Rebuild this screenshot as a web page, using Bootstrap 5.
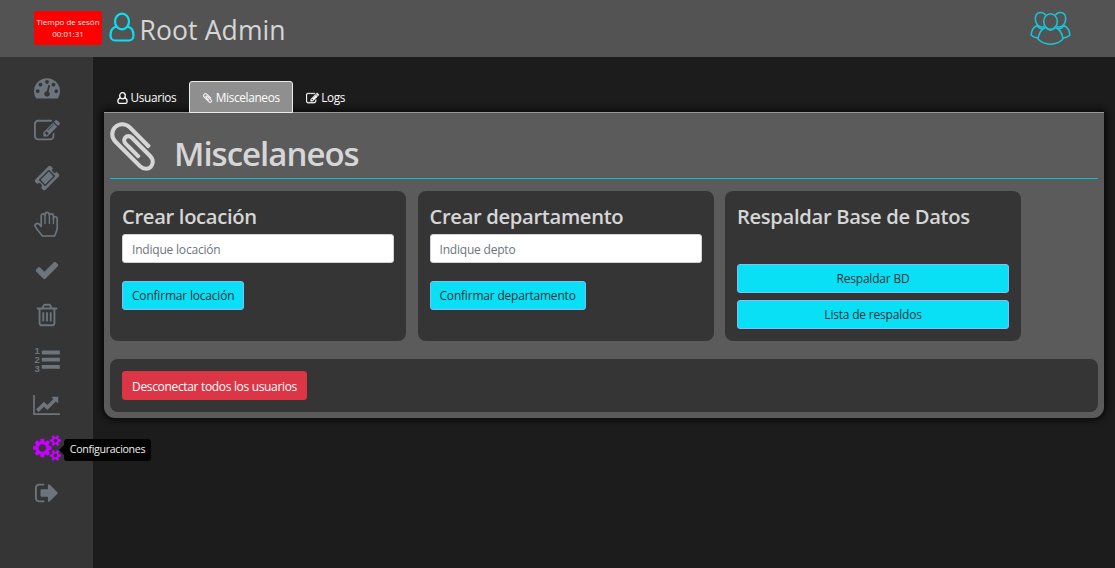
<!DOCTYPE html>
<html lang="es">
<head>
<meta charset="utf-8">
<meta name="viewport" content="width=device-width, initial-scale=1">
<title>Configuraciones</title>
<link href="https://cdn.jsdelivr.net/npm/bootstrap@5.3.0/dist/css/bootstrap.min.css" rel="stylesheet">
<style>
  body { font-family: "Open Sans", "Noto Sans", sans-serif; font-size: 12.25px; background: #1c1c1c; color: #d6d6d6; height: 100vh; overflow: hidden; }
  svg { display: block; flex: none; overflow: visible; }
  .topbar { height: 57px; background: #535353; }
  .session { width: 68px; height: 34px; margin: 11px 7px 0 34px; padding-top: 5px; background: #f00; border-radius: 3px; font-size: 8px; line-height: 12px; color: #e8e8e8; white-space: nowrap; letter-spacing: -.02px; }
  .brand-name { font-size: 26.5px; line-height: 40px; margin: 10px 0 0 4.5px; letter-spacing: .12px; }
  .side { width: 93px; background: #353535; color: #6c757d; }
  .side-icons { padding: 18px 0 0 34px; grid-template-rows: 43px 47px 46px 46px 45px 45px 45px 43px 45px 26px; }
  .side-icons a { color: inherit; height: 26px; display: flex; position: relative; }
  .side-icons a.current { color: #c800ff; }
  .tip { position: absolute; left: 30px; top: 4px; height: 22px; width: 87px; background: #040404; color: #eee; border-radius: 3px; font-size: 10.6px; line-height: 21px; text-align: center; letter-spacing: -.3px; z-index: 5; }
  .tip::before { content: ""; position: absolute; left: -5px; top: 6px; border: 5px solid transparent; border-left: 0; border-right-color: #040404; }
  .workspace { padding: 24px 11px 0; }
  .tabs-row .nav-link { height: 32px; padding: 2px 12px 0; border: 1px solid transparent; border-radius: 3px 3px 0 0; color: #fff; display: flex; align-items: center; font-size: 11.8px; letter-spacing: -.34px; }
  .tabs-row .nav-link svg { margin-right: 2.5px; }
  .tabs-row .nav-link.active { background: #8f8f8f; border-color: #ececec; color: #fff; }
  .tabs-row { margin-bottom: -1px; position: relative; }
  .panel { height: 306px; background: #5b5b5b; border-top: 1px solid #999; border-radius: 0 0 11px 11px; box-shadow: 0 0 6px 2px #080808; padding: 0 6px; }
  .panel-head { height: 66px; border-bottom: 1px solid #00c4d4; }
  .panel-head svg { margin-top: 4.5px; margin-left: -6px; }
  .panel-head h1 { font-size: 33px; line-height: 44px; font-weight: 600; margin: 19px 0 0 13px; letter-spacing: -1px; }
  .box { background: #353535; border-radius: 8px; padding: 12px; }
  .boxes { gap: 11.5px; margin: 12px 0 18px; }
  .boxes .box { width: 296px; height: 150px; }
  .box h2 { font-size: 20.2px; font-weight: 600; line-height: 26px; margin: 0 0 5px; letter-spacing: -.33px; white-space: nowrap; }
  .box .form-control { height: 29px; padding: 1px 9px 0; font-size: 12px; border-radius: 3px; border-color: #ced4da; letter-spacing: -.2px; margin-bottom: 18px; background: #fff; }
  .form-control::placeholder { color: #6c757d; }
  .box .btn { height: 29px; padding: 0 9px; font-size: 12px; line-height: 27px; border-radius: 3px; white-space: nowrap; }
  .btn-cyan { background: #09dff5; border-color: #80bdff; color: #2b3338; font-weight: 500; }
  .box .btn-cyan { letter-spacing: -.2px; }
  .box .btn-danger { letter-spacing: -.33px; padding-top: 1px; }
  .btn-cyan:hover { background: #07c9dd; }
</style>
</head>
<body class="d-flex flex-column">
<svg width="0" height="0" class="d-none">
  <symbol id="i-edit" viewBox="0 0 1792 1792"><path d="M888 1184l116-116-152-152-116 116v56h96v96h56zm440-720q-16-16-33 1l-350 350q-17 17-1 33t33-1l350-350q17-17 1-33zm80 594v190q0 119-84.500 203.500t-203.500 84.500h-832q-119 0-203.500-84.500t-84.500-203.500v-832q0-119 84.500-203.500t203.500-84.500h832q63 0 117 25 15 7 18 23 3 17-9 29l-49 49q-14 14-32 8-23-6-45-6h-832q-66 0-113 47t-47 113v832q0 66 47 113t113 47h832q66 0 113-47t47-113v-126q0-13 9-22l64-64q15-15 35-7t20 29zm-96-738l288 288-672 672h-288v-288zm444 132l-92 92-288-288 92-92q28-28 68-28t68 28l152 152q28 28 28 68t-28 68z"/></symbol>
  <symbol id="i-clip" viewBox="0 0 1792 1792"><path d="M1596 1385q0 117-79 196t-196 79q-135 0-235-100l-777-776q-113-115-113-271 0-159 110-270t269-111q158 0 273 113l605 606q10 10 10 22 0 16-30.500 46.500t-46.500 30.500q-13 0-23-10l-606-607q-79-77-181-77-106 0-179 75t-73 181q0 105 76 181l776 777q63 63 145 63 64 0 106-42t42-106q0-82-63-145l-581-581q-26-24-60-24-29 0-48 19t-19 48q0 32 25 59l410 410q10 10 10 22 0 16-31 47t-47 31q-12 0-22-10l-410-410q-63-61-63-149 0-82 57-139t139-57q88 0 149 63l581 581q100 98 100 235z"/></symbol>
  <symbol id="i-user" viewBox="0 0 26 30"><g fill="none" stroke="currentColor" stroke-width="2.200"><ellipse cx="13" cy="9.500" rx="7" ry="7.800"/><path d="M7.500 14.500C3 15.500 1.500 19.500 1.500 23.500C1.500 26.500 3.500 28.500 6 28.500H20C22.500 28.500 24.500 26.500 24.500 23.500C24.500 19.500 23 15.500 18.500 14.500"/></g></symbol>
  <symbol id="i-user-bold" viewBox="0 0 26 30"><g fill="none" stroke="currentColor" stroke-width="3.200"><ellipse cx="13" cy="9.500" rx="7" ry="7.800"/><path d="M7.500 14.500C3 15.500 1.500 19.500 1.500 23.500C1.500 26.500 3.500 28.500 6 28.500H20C22.500 28.500 24.500 26.500 24.500 23.500C24.500 19.500 23 15.500 18.500 14.500"/></g></symbol>
</svg>

<header class="topbar d-flex flex-shrink-0">
  <div class="session text-center">Tiempo de sesón<br>00:01:31</div>
  <svg width="26" height="30" style="color:#09dff5;margin-top:12px"><use href="#i-user"/></svg>
  <div class="brand-name">Root Admin</div>
  <svg class="ms-auto" style="margin-top:11px;margin-right:44px" width="41" height="35" viewBox="0 0 41 35" fill="none" stroke="#19c5d6" stroke-width="1.500">
    <ellipse cx="20.500" cy="10.500" rx="6.800" ry="7.700"/>
    <path d="M15.700 16.300C11 18.500 8.400 22.500 8.200 28.300C14.500 34.800 26.500 34.800 32.800 28.300C32.600 22.500 30 18.500 25.300 16.300C22.500 20.300 18.500 20.300 15.700 16.300Z"/>
    <path d="M15.500 4.200C13.500 .8 8 .6 6 4.200C4.200 8 5.700 13.500 9.500 15.500C11.200 16.400 13 16 14.500 15M25.500 4.200C27.500 .8 33 .6 35 4.200C36.800 8 35.300 13.500 31.500 15.500C29.800 16.400 28 16 26.500 15"/>
    <path d="M7 14.500C3.500 16.200 1.300 19.600 1.200 24.300C3 26 5.500 26.800 8.200 26.900M34 14.500C37.500 16.200 39.700 19.600 39.800 24.300C38 26 35.500 26.800 32.800 26.900M7 14.500C9 18 12 18 14 17M34 14.500C32 18 29 18 27 17"/>
  </svg>
</header>

<div class="d-flex flex-grow-1">
  <aside class="side flex-shrink-0">
    <nav class="side-icons d-grid">
      <a href="#"><svg width="26" height="26" viewBox="0 40 1792 1792" fill="currentColor"><path d="M384 1152q0-53-37.500-90.500t-90.500-37.500-90.500 37.500-37.500 90.500 37.500 90.500 90.500 37.500 90.500-37.500 37.500-90.500zm192-448q0-53-37.500-90.500t-90.500-37.500-90.500 37.500-37.500 90.500 37.500 90.500 90.500 37.500 90.500-37.500 37.500-90.500zm428 481l101-382q6-26-7.500-48.500t-38.500-29.500-48 6.500-30 39.500l-101 382q-60 5-107 43.500t-63 98.500q-20 77 20 146t117 89 146-20 89-117q16-60-6-117t-72-91zm660-33q0-53-37.500-90.500t-90.500-37.500-90.500 37.500-37.500 90.500 37.500 90.500 90.500 37.500 90.500-37.500 37.500-90.500zm-640-640q0-53-37.500-90.500t-90.500-37.500-90.500 37.500-37.500 90.500 37.500 90.500 90.500 37.500 90.500-37.500 37.500-90.500zm448 192q0-53-37.500-90.500t-90.500-37.500-90.500 37.500-37.500 90.500 37.500 90.500 90.500 37.500 90.500-37.500 37.500-90.500zm320 448q0 261-141 483-19 29-54 29h-1402q-35 0-54-29-141-221-141-483 0-182 71-348t191-286 286-191 348-71 348 71 286 191 191 286 71 348z"/></svg></a>
      <a href="#"><svg width="26" height="26" fill="currentColor"><use href="#i-edit"/></svg></a>
      <a href="#"><svg width="26" height="26" viewBox="0 0 1792 1792" fill="currentColor"><path d="M1024 452l316 316-572 572-316-316zm-211 979l618-618q19-19 19-45t-19-45l-362-362q-18-18-45-18t-45 18l-618 618q-19 19-19 45t19 45l362 362q18 18 45 18t45-18zm889-637l-907 908q-37 37-90.500 37t-90.500-37l-126-126q56-56 56-136t-56-136-136-56-136 56l-125-126q-37-37-37-90.500t37-90.500l907-906q37-37 90.500-37t90.500 37l125 125q-56 56-56 136t56 136 136 56 136-56l126 125q37 37 37 90.500t-37 90.500z"/></svg></a>
      <a href="#"><svg width="26" height="26" viewBox="0 0 26 26" fill="none" stroke="currentColor" stroke-width="1.700" stroke-linejoin="round" stroke-linecap="round"><path d="M8.500 25H20.500C21.500 22.500 23.200 20 23.200 17V8C23.200 5 19.400 5 19.400 8V5C19.400 2.500 15.500 2.200 15.400 4.500C15.400 .2 11 .2 11 4.500C10.700 2.200 7.200 2.500 7.200 5V15.500L5.200 13.200C3.400 11.300 .2 13.200 1.300 15.600C3.500 19 6 22 8.500 25Z"/><path stroke-width="1.400" d="M11 4.500V12.500M15.400 4.500V12.500M19.400 8V12.500"/></svg></a>
      <a href="#"><svg width="26" height="26" viewBox="0 0 1792 1792" fill="currentColor"><path d="M1671 566q0 40-28 68l-724 724-136 136q-28 28-68 28t-68-28l-136-136-362-362q-28-28-28-68t28-68l136-136q28-28 68-28t68 28l294 295 656-657q28-28 68-28t68 28l136 136q28 28 28 68z"/></svg></a>
      <a href="#"><svg width="26" height="26" viewBox="0 0 1792 1792" fill="currentColor"><path d="M704 736v576q0 14-9 23t-23 9h-64q-14 0-23-9t-9-23v-576q0-14 9-23t23-9h64q14 0 23 9t9 23zm256 0v576q0 14-9 23t-23 9h-64q-14 0-23-9t-9-23v-576q0-14 9-23t23-9h64q14 0 23 9t9 23zm256 0v576q0 14-9 23t-23 9h-64q-14 0-23-9t-9-23v-576q0-14 9-23t23-9h64q14 0 23 9t9 23zm128 724v-948h-896v948q0 22 7 40.500t14.500 27 10.500 8.500h832q3 0 10.500-8.500t14.500-27 7-40.500zm-672-1076h448l-48-117q-7-9-17-11h-317q-10 2-17 11zm928 32v64q0 14-9 23t-23 9h-96v948q0 83-47 143.500t-113 60.500h-832q-66 0-113-58.500t-47-141.500v-952h-96q-14 0-23-9t-9-23v-64q0-14 9-23t23-9h309l70-167q15-37 54-63t79-26h320q40 0 79 26t54 63l70 167h309q14 0 23 9t9 23z"/></svg></a>
      <a href="#"><svg width="26" height="26" viewBox="0 0 26 26" fill="currentColor"><path d="M7.800 3.600H25.800V7.400H7.800ZM7.800 10.800H25.800V14.600H7.800ZM7.800 18H25.800V21.800H7.800Z"/><g font-family="Liberation Sans" font-weight="700" font-size="9.500"><text x=".4" y="7">1</text><text x=".4" y="16">2</text><text x=".4" y="25">3</text></g></svg></a>
      <a href="#"><svg width="27" height="26" style="margin-left:-1px" viewBox="0 -100 2048 1992" fill="currentColor"><path d="M2048 1536v128h-2048v-1536h128v1408h1920zm-128-1248v435q0 21-19.500 29.500t-35.500-7.500l-121-121-633 633q-10 10-23 10t-23-10l-233-233-416 416-192-192 585-585q10-10 23-10t23 10l233 233 464-464-121-121q-16-16-7.500-35.500t29.500-19.500h435q14 0 23 9t9 23z"/></svg></a>
      <a href="#" class="current text-decoration-none"><svg width="28" height="26" style="margin-left:-1px" viewBox="0 0 1920 1792" fill="currentColor"><path d="M896 896q0-106-75-181t-181-75-181 75-75 181 75 181 181 75 181-75 75-181zm768 512q0-52-38-90t-90-38-90 38-38 90q0 53 37.500 90.500t90.500 37.500 90.500-37.500 37.500-90.500zm0-1024q0-52-38-90t-90-38-90 38-38 90q0 53 37.500 90.500t90.500 37.500 90.500-37.500 37.500-90.500zm-384 421v185q0 10-7 19.500t-16 10.500l-155 24q-11 35-32 76 34 48 90 115 7 11 7 20 0 12-7 19-23 30-82.500 89.500t-78.500 59.500q-11 0-21-7l-115-90q-37 19-77 31-11 108-23 155-7 24-30 24h-186q-11 0-20-7.500t-10-17.500l-23-153q-34-10-75-31l-118 89q-7 7-20 7-11 0-21-8-144-133-144-160 0-9 7-19 10-14 41-53t47-61q-23-44-35-82l-152-24q-10-1-17-9.500t-7-19.500v-185q0-10 7-19.500t16-10.500l155-24q11-35 32-76-34-48-90-115-7-11-7-20 0-12 7-20 22-30 82-89t79-59q11 0 21 7l115 90q34-18 77-32 11-108 23-154 7-24 30-24h186q11 0 20 7.500t10 17.500l23 153q34 10 75 31l118-89q8-7 20-7 11 0 21 8 144 133 144 160 0 8-7 19-12 16-42 54t-45 60q23 48 34 82l152 23q10 2 17 10.500t7 19.500zm640 533v140q0 16-149 31-12 27-30 52 51 113 51 138 0 4-4 7-122 71-124 71-8 0-46-47t-52-68q-20 2-30 2t-30-2q-14 21-52 68t-46 47q-2 0-124-71-4-3-4-7 0-25 51-138-18-25-30-52-149-15-149-31v-140q0-16 149-31 13-29 30-52-51-113-51-138 0-4 4-7 4-2 35-20t59-34 30-16q8 0 46 46.500t52 67.500q20-2 30-2t30 2q51-71 92-112l6-2q4 0 124 70 4 3 4 7 0 25-51 138 17 23 30 52 149 15 149 31zm0-1024v140q0 16-149 31-12 27-30 52 51 113 51 138 0 4-4 7-122 71-124 71-8 0-46-47t-52-68q-20 2-30 2t-30-2q-14 21-52 68t-46 47q-2 0-124-71-4-3-4-7 0-25 51-138-18-25-30-52-149-15-149-31v-140q0-16 149-31 13-29 30-52-51-113-51-138 0-4 4-7 4-2 35-20t59-34 30-16q8 0 46 46.500t52 67.500q20-2 30-2t30 2q51-71 92-112l6-2q4 0 124 70 4 3 4 7 0 25-51 138 17 23 30 52 149 15 149 31z"/></svg><span class="tip">Configuraciones</span></a>
      <a href="#"><svg width="26" height="26" viewBox="0 0 1792 1792" fill="currentColor"><path d="M704 1440q0 4 1 20t.500 26.500-3 23.500-10 19.500-20.500 6.500h-320q-119 0-203.500-84.500t-84.500-203.500v-704q0-119 84.500-203.500t203.500-84.500h320q13 0 22.500 9.500t9.500 22.500q0 4 1 20t.500 26.500-3 23.500-10 19.500-20.500 6.500h-320q-66 0-113 47t-47 113v704q0 66 47 113t113 47h312l11.500 1 11.500 3 8 5.500 7 9 2 13.500zm928-544q0 26-19 45l-544 544q-19 19-45 19t-45-19-19-45v-288h-448q-26 0-45-19t-19-45v-384q0-26 19-45t45-19h448v-288q0-26 19-45t45-19 45 19l544 544q19 19 19 45z"/></svg></a>
    </nav>
  </aside>

  <main class="workspace flex-grow-1">
    <ul class="nav tabs-row">
      <li class="nav-item"><a class="nav-link" href="#"><svg width="11" height="12"><use href="#i-user-bold"/></svg><span>Usuarios</span></a></li>
      <li class="nav-item"><a class="nav-link active" href="#"><svg width="11" height="12" fill="currentColor" stroke="currentColor" stroke-width="50"><use href="#i-clip"/></svg><span>Miscelaneos</span></a></li>
      <li class="nav-item"><a class="nav-link" href="#"><svg width="13" height="13" fill="currentColor" stroke="currentColor" stroke-width="40"><use href="#i-edit"/></svg><span>Logs</span></a></li>
    </ul>
    <section class="panel">
      <div class="panel-head d-flex">
        <svg width="57" height="57" fill="currentColor"><use href="#i-clip"/></svg>
        <h1>Miscelaneos</h1>
      </div>
      <div class="boxes d-flex">
        <div class="box">
          <h2>Crear locación</h2>
          <input class="form-control" placeholder="Indique locación">
          <button class="btn btn-cyan">Confirmar locación</button>
        </div>
        <div class="box">
          <h2>Crear departamento</h2>
          <input class="form-control" placeholder="Indique depto">
          <button class="btn btn-cyan">Confirmar departamento</button>
        </div>
        <div class="box d-flex flex-column">
          <h2>Respaldar Base de Datos</h2>
          <button class="btn btn-cyan w-100 mt-auto">Respaldar BD</button>
          <button class="btn btn-cyan w-100" style="margin-top:7px">Lista de respaldos</button>
        </div>
      </div>
      <div class="box" style="height:53px">
        <button class="btn btn-danger">Desconectar todos los usuarios</button>
      </div>
    </section>
  </main>
</div>
<script src="https://cdn.jsdelivr.net/npm/bootstrap@5.3.0/dist/js/bootstrap.bundle.min.js"></script>
</body>
</html>
